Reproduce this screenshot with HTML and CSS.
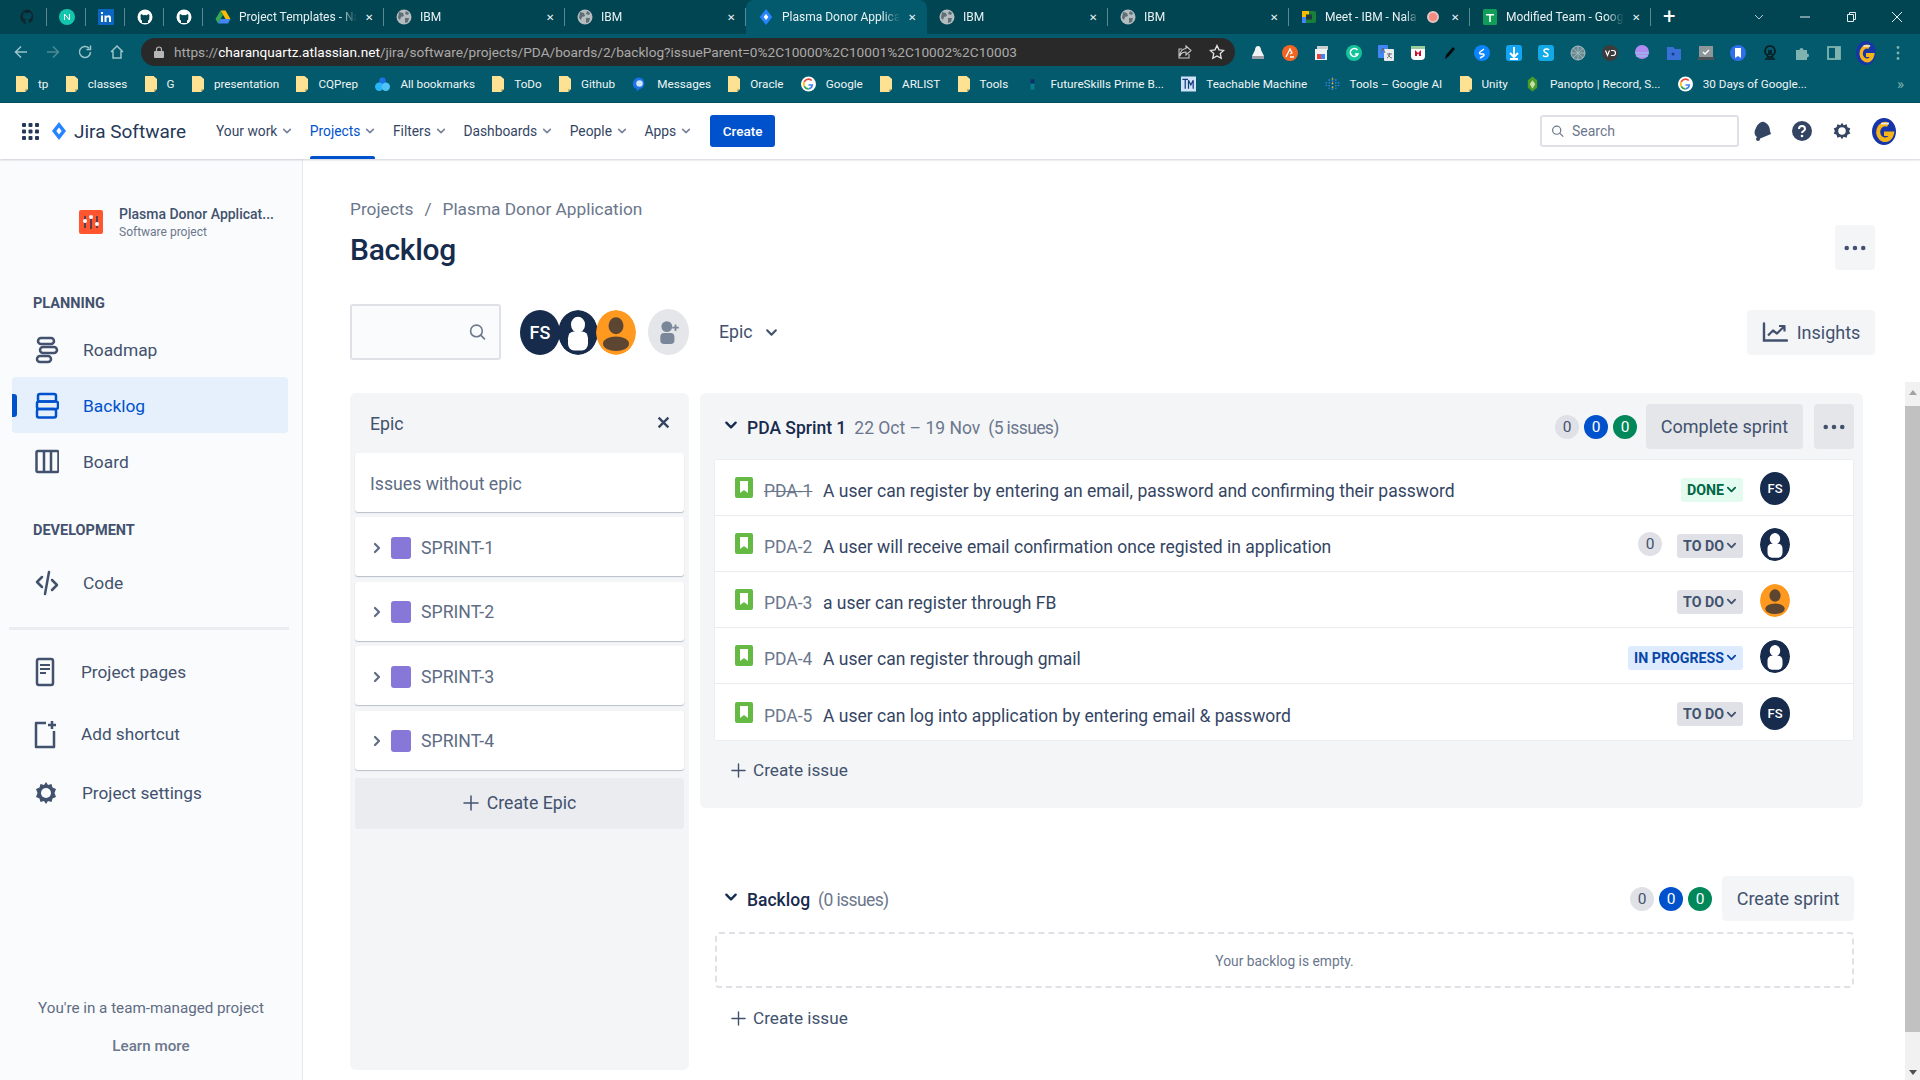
FILE: index.html
```html
<!DOCTYPE html>
<html lang="en">
<head>
    <meta charset="UTF-8">
    <title>Backlog - Jira</title>
    <link rel="stylesheet" href="styles.css">
</head>
<body>

<svg class="sprite" xmlns="http://www.w3.org/2000/svg">
    <symbol id="globe" viewBox="0 0 16 16"><circle cx="8" cy="8" r="7.5" fill="#b4bcc0"/><path d="M3 3l4 1 1 3-3 1-1 3-2-2zM10 2l3 2-1 2-3-1zM9 9l4 0-1 4-3 1z" fill="#5f6f76"/></symbol>
    <symbol id="github-white" viewBox="0 0 16 16"><circle cx="8" cy="8" r="7.5" fill="#fff"/><path d="M5 14v-2.500C3.500 11 3.500 9.800 3.800 8.500 3.300 7 3.600 5.800 4 5.200c1 0 1.800.6 2.200 1a6 6 0 0 1 3.600 0c.4-.4 1.200-1 2.200-1 .4.6.7 1.800.2 3.300.3 1.300.3 2.500-1.200 3V14z" fill="#024552"/></symbol>
    <symbol id="github-dark" viewBox="0 0 16 16"><path d="M8 .5a7.500 7.500 0 0 0-2.400 14.600v-2.600C3.500 13 3 11.500 3 11.500c-.4-.9-1-1.200-1-1.200.7 0 1.300.7 1.300.7.700 1.200 1.800.8 2.300.6 0-.5.300-.8.500-1C4.300 10.300 2.600 9.600 2.600 7c0-.8.300-1.400.7-1.900 0-.2-.3-1 .1-1.900 0 0 .6-.2 2 .7a6.500 6.500 0 0 1 3.600 0c1.400-.9 2-.7 2-.7.400.9.100 1.700.1 1.900.4.500.7 1.100.7 1.900 0 2.600-1.700 3.300-3.400 3.500.3.200.5.600.5 1.200v2.600A7.500 7.500 0 0 0 8 .5z" fill="#10222a"/></symbol>
    <symbol id="folder" viewBox="0 0 12 16"><path d="M0 0h8.500L12 3v10l-3 3H0z" fill="#fde293"/><path d="M12 13l-3 3v-3z" fill="#c9b26b"/></symbol>
    <symbol id="google" viewBox="0 0 16 16"><circle cx="8" cy="8" r="8" fill="#fff"/><path d="M13 8.200H8v1.700h3a3.200 3.200 0 0 1-3 2.300V14a5.800 5.800 0 0 0 5-5.800z" fill="#4285f4"/><path d="M8 14v-1.800a4.200 4.200 0 0 1-3.800-2.400l-1.500 1.100A6 6 0 0 0 8 14z" fill="#34a853"/><path d="M4.200 9.800a4.200 4.200 0 0 1 0-3.600L2.700 5.100a6 6 0 0 0 0 5.800z" fill="#fbbc05"/><path d="M8 3.800a4 4 0 0 1 2.800 1.100l1.300-1.300A6 6 0 0 0 2.700 5.100l1.500 1.100A4.200 4.200 0 0 1 8 3.800z" fill="#ea4335"/></symbol>
    <symbol id="jira-mark" viewBox="0 0 16 18"><path d="M8 0l7 9-7 9-7-9z" fill="#2684ff"/><path d="M8 5.500L10.700 9 8 12.500 5.300 9z" fill="#fff"/></symbol>
    <symbol id="chevron-down" viewBox="0 0 12 12"><path d="M2 4l4 4 4-4" fill="none" stroke="currentColor" stroke-width="2" stroke-linecap="round" stroke-linejoin="round"/></symbol>
    <symbol id="chevron-right" viewBox="0 0 12 12"><path d="M4 2l4 4-4 4" fill="none" stroke="currentColor" stroke-width="2.200" stroke-linecap="round" stroke-linejoin="round"/></symbol>
    <symbol id="plus" viewBox="0 0 16 16"><path d="M8 1v14M1 8h14" fill="none" stroke="currentColor" stroke-width="1.500" stroke-linecap="round"/></symbol>
    <symbol id="dots" viewBox="0 0 24 6"><circle cx="3" cy="3" r="2.500" fill="currentColor"/><circle cx="12" cy="3" r="2.500" fill="currentColor"/><circle cx="21" cy="3" r="2.500" fill="currentColor"/></symbol>
    <symbol id="story" viewBox="0 0 18 21"><rect width="18" height="21" rx="2" fill="#65ba43"/><path d="M5 4h8v12l-4-3-4 3z" fill="#fff"/></symbol>
    <symbol id="avatar-user" viewBox="0 0 40 40" preserveAspectRatio="none"><circle cx="20" cy="20" r="20" fill="#172b4d"/><circle cx="20" cy="13" r="7" fill="#fff"/><rect x="10" y="19" width="20" height="17" rx="6" fill="#fff"/></symbol>
    <symbol id="avatar-orange" viewBox="0 0 40 40" preserveAspectRatio="none"><circle cx="20" cy="20" r="20" fill="#ff991f"/><circle cx="20" cy="14" r="7.500" fill="#5c4632"/><ellipse cx="20" cy="30" rx="13" ry="6.500" fill="#5c4632"/></symbol>
</svg>

<div class="tabbar">
    <div class="pinned"><svg class="favicon"><use href="#github-dark"/></svg></div>
    <div class="pinned"><svg class="favicon" viewBox="0 0 16 16"><circle cx="8" cy="8" r="8" fill="#13c7ae"/><path d="M5.500 11V5l5 6V5" fill="none" stroke="#fff" stroke-width="1"/></svg></div>
    <div class="pinned"><svg class="favicon" viewBox="0 0 16 16"><rect width="16" height="16" rx="1" fill="#0a66c2"/><path d="M3 6.500h2V13H3zM3 3h2v2H3zM6.500 6.500h2v1c.5-.8 1.200-1.200 2.200-1.200 1.700 0 2.300 1.100 2.300 3V13h-2V9.800c0-1-.3-1.600-1.100-1.600-.9 0-1.400.6-1.400 1.700V13h-2z" fill="#fff"/></svg></div>
    <div class="pinned"><svg class="favicon"><use href="#github-white"/></svg></div>
    <div class="pinned"><svg class="favicon"><use href="#github-white"/></svg></div>
    <div class="tab">
        <svg class="favicon" viewBox="0 0 16 16"><path d="M5.500 1.500h5L15.500 10H10.500z" fill="#fbbc04"/><path d="M5.500 1.500L.5 10l2.500 4.500L8 6z" fill="#34a853"/><path d="M3 14.500h10l2.500-4.500h-10z" fill="#4285f4"/></svg>
        <span class="tab-title">Project Templates - Na</span><span class="tab-close">✕</span>
    </div>
    <div class="tab"><svg class="favicon"><use href="#globe"/></svg><span class="tab-title">IBM</span><span class="tab-close">✕</span></div>
    <div class="tab"><svg class="favicon"><use href="#globe"/></svg><span class="tab-title">IBM</span><span class="tab-close">✕</span></div>
    <div class="tab tab-active"><svg class="favicon"><use href="#jira-mark"/></svg><span class="tab-title">Plasma Donor Applica</span><span class="tab-close">✕</span></div>
    <div class="tab"><svg class="favicon"><use href="#globe"/></svg><span class="tab-title">IBM</span><span class="tab-close">✕</span></div>
    <div class="tab"><svg class="favicon"><use href="#globe"/></svg><span class="tab-title">IBM</span><span class="tab-close">✕</span></div>
    <div class="tab">
        <svg class="favicon" viewBox="0 0 16 16"><rect x="1" y="2" width="14" height="12" rx="2" fill="#188038"/><rect x="1" y="2" width="7" height="6" fill="#fbbc04"/><rect x="1" y="8" width="4" height="6" fill="#4285f4"/><rect x="5" y="5.500" width="6" height="5" fill="#1d3a40"/></svg>
        <span class="tab-title">Meet - IBM - Nala</span><span class="rec-dot"></span><span class="tab-close">✕</span>
    </div>
    <div class="tab">
        <svg class="favicon" viewBox="0 0 16 16"><rect x="1" width="14" height="16" rx="1.500" fill="#0f9d58"/><path d="M4 5h8v1.500H8.800V13H7.200V6.500H4z" fill="#fff"/></svg>
        <span class="tab-title">Modified Team - Goog</span><span class="tab-close">✕</span>
    </div>
    <span class="new-tab">+</span>
    <div class="window-controls">
        <svg viewBox="0 0 12 12"><path d="M2 4l4 4 4-4" fill="none" stroke="#b9cdd2" stroke-width="1"/></svg>
        <svg viewBox="0 0 12 12"><path d="M1 6h10" stroke="#e6eef0" stroke-width="1"/></svg>
        <svg viewBox="0 0 12 12"><path d="M2.500 3.500h6v7h-6zM4.500 3.500v-2h6v7h-2" fill="none" stroke="#e6eef0" stroke-width="1"/></svg>
        <svg viewBox="0 0 12 12"><path d="M1 1l10 10M11 1L1 11" stroke="#e6eef0" stroke-width="1"/></svg>
    </div>
</div>

<div class="toolbar">
    <div class="browser-nav">
        <svg viewBox="0 0 16 16"><path d="M14 8H2.500M8 2.500L2.500 8 8 13.500" fill="none" stroke="#9cc4c9" stroke-width="1.500"/></svg>
        <svg viewBox="0 0 16 16"><path d="M2 8h11.500M8 2.500L13.500 8 8 13.500" fill="none" stroke="#4d8b96" stroke-width="1.500"/></svg>
        <svg viewBox="0 0 16 16"><path d="M13.500 8a5.500 5.500 0 1 1-1.600-3.900M13.500 1.500v4h-4" fill="none" stroke="#9cc4c9" stroke-width="1.500"/></svg>
        <svg viewBox="0 0 16 16"><path d="M2 8l6-6 6 6M4 7v7h8V7" fill="none" stroke="#9cc4c9" stroke-width="1.500"/></svg>
    </div>
    <div class="addressbar">
        <svg class="lock" viewBox="0 0 10 12"><rect y="5" width="10" height="7" rx="1" fill="#b7b7b7"/><path d="M2.500 5V3.500a2.500 2.500 0 0 1 5 0V5" fill="none" stroke="#b7b7b7" stroke-width="1.200"/></svg>
        <span class="url">https://<b>charanquartz.atlassian.net</b>/jira/software/projects/PDA/boards/2/backlog?issueParent=0%2C10000%2C10001%2C10002%2C10003</span>
        <svg class="addr-icon" viewBox="0 0 16 16"><path d="M9 2l5 4.500L9 11V8C6 8 4 9 3 12c0-4 2-7 6-7.500zM12 10v4H2V5h3" fill="none" stroke="#c7c7c7" stroke-width="1.100"/></svg>
        <svg class="addr-icon" viewBox="0 0 16 16"><path d="M8 1.500l2 4.300 4.700.6-3.400 3.200.9 4.700L8 12l-4.200 2.300.9-4.700L1.300 6.400 6 5.800z" fill="none" stroke="#e5e5e5" stroke-width="1.300"/></svg>
    </div>
    <div class="extensions">
        <svg viewBox="0 0 16 16"><path d="M8 1c2 0 3 2 3 4l3 6v3H2v-3l3-6c0-2 1-4 3-4z" fill="#f1f3f4"/><rect x="2" y="11" width="12" height="3" fill="#9aa0a6"/></svg>
        <svg viewBox="0 0 16 16"><circle cx="8" cy="8" r="8" fill="#f26522"/><path d="M4 12l4-8 2 4-2 1M8 12h4" fill="none" stroke="#fff" stroke-width="1.300"/></svg>
        <svg viewBox="0 0 16 16"><rect x="3" y="1" width="11" height="4" fill="#c9ced1"/><rect x="1" y="4" width="12" height="11" fill="#f1f3f4"/><rect x="3" y="9" width="4" height="5" fill="#ea4335"/><rect x="7" y="9" width="4" height="5" fill="#4285f4"/></svg>
        <svg viewBox="0 0 16 16"><circle cx="8" cy="8" r="8" fill="#15c39a"/><path d="M11.500 5a4 4 0 1 0 .5 4H9" fill="none" stroke="#fff" stroke-width="1.500"/></svg>
        <svg viewBox="0 0 16 16"><rect x="0" y="0" width="10" height="13" rx="1" fill="#4285f4"/><rect x="6" y="4" width="10" height="12" rx="1" fill="#e8eaed"/><path d="M3 8l2-5 2 5M9 9h5M11.500 8c0 3-1 4-2.500 5M10.500 10c.5 1.500 2 3 3.500 3" fill="none" stroke="#5f6368" stroke-width=".9"/></svg>
        <svg viewBox="0 0 16 16"><path d="M1 1h14v10a4 4 0 0 1-4 4H5a4 4 0 0 1-4-4z" fill="#fff"/><path d="M1 1h14v3H1z" fill="#9ccc9c"/><path d="M5 5l3 3 3-3v6H9V8.500L8 9.500 7 8.500V11H5z" fill="#c8102e"/></svg>
        <svg viewBox="0 0 16 16"><path d="M3 14l1-4 7-8 2 2-7 8z" fill="#0a0a0a"/></svg>
        <svg viewBox="0 0 16 16"><circle cx="8" cy="8" r="8" fill="#0a84ff"/><path d="M10 4L6 7c-1 1-.5 2 1 2l2 0c1 0 1.500 1 .5 2L6 13" fill="none" stroke="#fff" stroke-width="1.500"/></svg>
        <svg viewBox="0 0 16 16"><rect width="16" height="16" rx="3" fill="#12a5f4"/><path d="M8 2v9M4 8l4 4 4-4M4 14h8" fill="none" stroke="#fff" stroke-width="2"/></svg>
        <svg viewBox="0 0 16 16"><rect width="16" height="16" rx="3" fill="#11a9e8"/><path d="M11 5c-1-1.500-5-1.500-5 .8C6 8 10 7.500 10 10c0 2-3.500 2-5 .5" fill="none" stroke="#fff" stroke-width="1.500"/></svg>
        <svg viewBox="0 0 16 16"><circle cx="8" cy="8" r="7" fill="#6a8a91" stroke="#a9bcc0"/><path d="M8 1v14M1 8h14M3 3l10 10M13 3L3 13" stroke="#a9bcc0" stroke-width=".8"/></svg>
        <svg viewBox="0 0 16 16"><circle cx="8" cy="8" r="8" fill="#3c3c3c"/><path d="M3.500 5.500l2 5 2-5M9 5.500h2a2.500 2.500 0 0 1 0 5H9" fill="none" stroke="#fff" stroke-width="1.200"/></svg>
        <svg viewBox="0 0 16 16"><circle cx="8" cy="7" r="7" fill="#b18bf0"/><path d="M1 8h14M2 11h12" stroke="#8fd0e8" stroke-width="1.200"/></svg>
        <svg viewBox="0 0 16 16"><path d="M1 2h6l2 2h6v11H1z" fill="#3a6fd8"/><circle cx="7" cy="9" r="1.500" fill="#0f3d8c"/></svg>
        <svg viewBox="0 0 16 16"><rect x="1" y="1" width="14" height="11" fill="#8d9699"/><rect y="12" width="16" height="3" fill="#4b5356"/><path d="M5 7l2 2 4-4" fill="none" stroke="#fff" stroke-width="1.300"/></svg>
        <svg viewBox="0 0 16 16"><circle cx="8" cy="8" r="8" fill="#2f6fed"/><path d="M5 3h6v10L8 11l-3 2z" fill="#fff"/></svg>
        <svg viewBox="0 0 16 16"><path d="M8 1a5 5 0 0 0-2.500 9.300V12h5v-1.700A5 5 0 0 0 8 1zM7 5v5M9 5v5M3 14h10" fill="none" stroke="#0b1a1e" stroke-width="1.600"/></svg>
        <svg viewBox="0 0 16 16"><path d="M2 5h3.500a2 2 0 1 1 4 0H13v3.500a2 2 0 1 1 0 4V15H2z" fill="#7fb3b0"/></svg>
        <svg viewBox="0 0 16 16"><rect x="2" y="2" width="12" height="12" fill="none" stroke="#7fb3b0" stroke-width="1.800"/><rect x="9" y="2" width="5" height="12" fill="#7fb3b0"/></svg>
        <svg class="ext-avatar" viewBox="0 0 24 24" preserveAspectRatio="none"><circle cx="12" cy="12" r="12" fill="#1535a8"/><path d="M16 6a7 7 0 1 0 4 8h-8" fill="none" stroke="#f5b518" stroke-width="4"/><path d="M9 5h8" stroke="#e8e8f8" stroke-width="1.500"/></svg>
        <svg class="ext-menu" viewBox="0 0 4 16"><circle cx="2" cy="2.500" r="1.400" fill="#7fb3b0"/><circle cx="2" cy="8" r="1.400" fill="#7fb3b0"/><circle cx="2" cy="13.500" r="1.400" fill="#7fb3b0"/></svg>
    </div>
</div>

<div class="bookmarks">
    <span class="bm"><svg class="bm-folder"><use href="#folder"/></svg>tp</span>
    <span class="bm"><svg class="bm-folder"><use href="#folder"/></svg>classes</span>
    <span class="bm"><svg class="bm-folder"><use href="#folder"/></svg>G</span>
    <span class="bm"><svg class="bm-folder"><use href="#folder"/></svg>presentation</span>
    <span class="bm"><svg class="bm-folder"><use href="#folder"/></svg>CQPrep</span>
    <span class="bm"><svg class="bm-icon" viewBox="0 0 16 16"><circle cx="8" cy="4.500" r="3.500" fill="#1a73e8"/><circle cx="4.500" cy="11" r="4.500" fill="#29b6f6"/><circle cx="11.500" cy="11" r="4.500" fill="#4fc3f7"/></svg>All bookmarks</span>
    <span class="bm"><svg class="bm-folder"><use href="#folder"/></svg>ToDo</span>
    <span class="bm"><svg class="bm-folder"><use href="#folder"/></svg>Github</span>
    <span class="bm"><svg class="bm-icon" viewBox="0 0 16 16"><path d="M8 1a7 6.500 0 0 0-3 12.400V16l3-2.500A7 6.500 0 0 0 8 1z" fill="#1a73e8"/><circle cx="8" cy="7.500" r="3.500" fill="#d2e3fc"/></svg>Messages</span>
    <span class="bm"><svg class="bm-folder"><use href="#folder"/></svg>Oracle</span>
    <span class="bm"><svg class="bm-icon"><use href="#google"/></svg>Google</span>
    <span class="bm"><svg class="bm-folder"><use href="#folder"/></svg>ARLIST</span>
    <span class="bm"><svg class="bm-folder"><use href="#folder"/></svg>Tools</span>
    <span class="bm"><svg class="bm-icon" viewBox="0 0 16 16"><rect x="6" y="3" width="4" height="4" fill="#0f2d6b"/><rect x="6" y="8" width="4" height="6" fill="#0d7c8c"/></svg>FutureSkills Prime B...</span>
    <span class="bm"><svg class="bm-icon" viewBox="0 0 16 16"><rect width="16" height="16" fill="#cfe2f7"/><path d="M1.500 3h6M4.500 3v10M8 13V4l2.500 5L13 4v9" fill="none" stroke="#123b7a" stroke-width="1.300"/></svg>Teachable Machine</span>
    <span class="bm"><svg class="bm-icon" viewBox="0 0 16 16"><path d="M8 1v14M4.500 3v10M11.500 3v10M1.500 6v4M14.500 6v4" fill="none" stroke="#4285f4" stroke-width="1.600" stroke-dasharray="1.500 1.500"/><path d="M8 2v12" stroke="#fbbc04" stroke-width="1.600" stroke-dasharray="1.500 3"/></svg>Tools – Google AI</span>
    <span class="bm"><svg class="bm-folder"><use href="#folder"/></svg>Unity</span>
    <span class="bm"><svg class="bm-icon" viewBox="0 0 16 16"><path d="M8 0l5 4v8l-5 4-5-4V4z" fill="#4c9a2a"/><path d="M8 4l3 4-3 5-3-5z" fill="#c5e1a5"/></svg>Panopto | Record, S...</span>
    <span class="bm"><svg class="bm-icon"><use href="#google"/></svg>30 Days of Google...</span>
    <span class="bm-more">»</span>
</div>

<header class="topnav">
    <svg class="apps-grid" viewBox="0 0 17 17"><g fill="#253858"><rect width="4" height="4" rx="1"/><rect x="6.500" width="4" height="4" rx="1"/><rect x="13" width="4" height="4" rx="1"/><rect y="6.500" width="4" height="4" rx="1"/><rect x="6.500" y="6.500" width="4" height="4" rx="1"/><rect x="13" y="6.500" width="4" height="4" rx="1"/><rect y="13" width="4" height="4" rx="1"/><rect x="6.500" y="13" width="4" height="4" rx="1"/><rect x="13" y="13" width="4" height="4" rx="1"/></g></svg>
    <div class="logo"><svg class="logo-mark"><use href="#jira-mark"/></svg><span>Jira Software</span></div>
    <nav class="topnav-menu">
        <a class="menu-item">Your work<svg><use href="#chevron-down"/></svg></a>
        <a class="menu-item menu-active">Projects<svg><use href="#chevron-down"/></svg></a>
        <a class="menu-item">Filters<svg><use href="#chevron-down"/></svg></a>
        <a class="menu-item">Dashboards<svg><use href="#chevron-down"/></svg></a>
        <a class="menu-item">People<svg><use href="#chevron-down"/></svg></a>
        <a class="menu-item">Apps<svg><use href="#chevron-down"/></svg></a>
    </nav>
    <button class="create-btn">Create</button>
    <div class="topnav-right">
        <div class="nav-search">
            <svg viewBox="0 0 16 16"><circle cx="7" cy="7" r="5" fill="none" stroke="#6b778c" stroke-width="1.500"/><path d="M11 11l4 4" stroke="#6b778c" stroke-width="1.500"/></svg>
            <span>Search</span>
        </div>
        <svg class="nav-icon" viewBox="0 0 20 20"><path d="M12 1c3 1 6 4 6 9l1 3-12 5-2-2c-3-2-3-6-1-9 1-3 5-7 8-6z" fill="#344563"/><circle cx="6" cy="18" r="2" fill="#344563"/></svg>
        <svg class="nav-icon" viewBox="0 0 20 20"><circle cx="10" cy="10" r="10" fill="#344563"/><path d="M7 8c0-4 6-4 6 0 0 2-3 2-3 4" fill="none" stroke="#fff" stroke-width="2"/><circle cx="10" cy="15" r="1.300" fill="#fff"/></svg>
        <svg class="nav-icon nav-gear" viewBox="0 0 24 24"><path d="M12 2l2 3 3.500-1 1 3.500L22 9l-1.500 3 1.500 3-3.500 1.500-1 3.500-3.500-1-2 3-2-3-3.500 1-1-3.500L2 15l1.500-3L2 9l3.500-1.500 1-3.500L10 5z" fill="#344563"/><circle cx="12" cy="12" r="4.500" fill="#fff"/></svg>
        <svg class="nav-avatar" viewBox="0 0 24 24" preserveAspectRatio="none"><circle cx="12" cy="12" r="12" fill="#1535a8"/><path d="M16 6a7 7 0 1 0 4 8h-8" fill="none" stroke="#f5b518" stroke-width="4"/><path d="M9 5h8" stroke="#e8e8f8" stroke-width="1.500"/></svg>
    </div>
</header>

<div class="workspace">
    <aside class="sidebar">
        <div class="project-head">
            <svg class="project-icon" viewBox="0 0 24 24"><rect width="24" height="24" rx="2" fill="#ff5630"/><path d="M6 6v12M12 5v14M18 6v12" stroke="#253858" stroke-width="1.500"/><circle cx="6" cy="11" r="2" fill="#fff"/><circle cx="12" cy="7" r="2" fill="#fff"/><circle cx="18" cy="14" r="2" fill="#fff"/></svg>
            <div>
                <div class="project-name">Plasma Donor Applicat...</div>
                <div class="project-type">Software project</div>
            </div>
        </div>

        <h4 class="side-title">PLANNING</h4>
        <a class="side-item">
            <svg viewBox="0 0 24 28"><g fill="none" stroke="#42526e" stroke-width="2.500"><rect x="3" y="2" width="16" height="6" rx="3"/><rect x="5" y="11" width="17" height="6" rx="3"/><rect x="2" y="20" width="14" height="6" rx="3"/></g></svg>
            Roadmap
        </a>
        <a class="side-item side-active">
            <svg viewBox="0 0 24 28"><g fill="none" stroke="#0052cc" stroke-width="2.500"><rect x="3" y="2" width="18" height="7.500" rx="2"/><rect x="2" y="9.500" width="21" height="7.500" rx="2"/><rect x="2" y="17" width="19" height="8.500" rx="2"/></g></svg>
            Backlog
        </a>
        <a class="side-item">
            <svg viewBox="0 0 24 28"><g fill="none" stroke="#42526e" stroke-width="2.500"><rect x="1.500" y="3" width="22" height="21" rx="1.500"/><path d="M9 3v21M16 3v21"/></g></svg>
            Board
        </a>

        <h4 class="side-title side-title-dev">DEVELOPMENT</h4>
        <a class="side-item">
            <svg viewBox="0 0 24 28"><path d="M7 8l-5 5 5 5M17 11l5 5-5 5M14 3l-4 22" fill="none" stroke="#42526e" stroke-width="2.500" stroke-linecap="round" stroke-linejoin="round"/></svg>
            Code
        </a>

        <div class="side-divider"></div>

        <a class="side-link">
            <svg viewBox="0 0 24 30"><g fill="none" stroke="#42526e" stroke-width="2.500"><rect x="4" y="2" width="16" height="26" rx="2"/></g><path d="M7 7h10v2H7zM7 11h10v2H7zM7 15h6v2H7z" fill="#42526e"/></svg>
            Project pages
        </a>
        <a class="side-link side-link-short">
            <svg viewBox="0 0 24 30"><path d="M13 4H3v24h18V12" fill="none" stroke="#42526e" stroke-width="2.500" stroke-linejoin="round"/><path d="M19 2v8M15 6h8" stroke="#42526e" stroke-width="2.500"/></svg>
            Add shortcut
        </a>
        <a class="side-link side-link-settings">
            <svg viewBox="0 0 24 24"><path d="M12 1l2 3 3.500-1 1 3.500L22 8l-1.500 4 1.500 4-3.500 1.500-1 3.500-3.500-1-2 3-2-3-3.500 1-1-3.500L2 16l1.500-4L2 8l3.500-1.500 1-3.500L10 4z" fill="#42526e"/><circle cx="12" cy="12" r="5" fill="#fafbfc"/></svg>
            Project settings
        </a>

        <div class="side-foot">
            <p>You're in a team-managed project</p>
            <p class="learn-more">Learn more</p>
        </div>
    </aside>

    <main class="main">
        <div class="page-head">
            <div>
                <div class="crumbs"><span>Projects</span><span class="crumb-sep">/</span><span>Plasma Donor Application</span></div>
                <h1>Backlog</h1>
            </div>
            <button class="grey-btn more-btn"><svg class="dots"><use href="#dots"/></svg></button>
        </div>

        <div class="filters">
            <div class="filter-search">
                <svg viewBox="0 0 16 16"><circle cx="7" cy="7" r="5.500" fill="none" stroke="#6b778c" stroke-width="1.500"/><path d="M11 11l4 4" stroke="#6b778c" stroke-width="1.500"/></svg>
            </div>
            <div class="avatars">
                <span class="av-big av-fs">FS</span>
                <svg class="av-big"><use href="#avatar-user"/></svg>
                <svg class="av-big"><use href="#avatar-orange"/></svg>
            </div>
            <span class="av-add">
                <svg viewBox="0 0 24 24"><circle cx="10" cy="7" r="5" fill="#7a869a"/><rect x="4" y="13" width="13" height="10" rx="3.500" fill="#7a869a"/><path d="M18 5v6M15 8h6" stroke="#7a869a" stroke-width="1.600"/></svg>
            </span>
            <span class="epic-filter">Epic<svg><use href="#chevron-down"/></svg></span>
            <button class="grey-btn insights-btn">
                <svg viewBox="0 0 26 20"><path d="M2 1v17h23" fill="none" stroke="#42526e" stroke-width="2.400" stroke-linecap="round"/><path d="M6 13l5-5 4 3 7-7M17 3.500h5.500V9" fill="none" stroke="#42526e" stroke-width="2.200" stroke-linejoin="round"/></svg>
                Insights
            </button>
        </div>

        <div class="board">
            <section class="epic-panel">
                <div class="epic-head">
                    <span>Epic</span>
                    <svg viewBox="0 0 12 12"><path d="M1.500 1.500l9 9M10.500 1.500l-9 9" stroke="#344563" stroke-width="2.200"/></svg>
                </div>
                <div class="epic-card">Issues without epic</div>
                <div class="epic-card epic-sprint"><svg class="epic-arrow"><use href="#chevron-right"/></svg><span class="epic-color"></span>SPRINT-1</div>
                <div class="epic-card epic-sprint"><svg class="epic-arrow"><use href="#chevron-right"/></svg><span class="epic-color"></span>SPRINT-2</div>
                <div class="epic-card epic-sprint"><svg class="epic-arrow"><use href="#chevron-right"/></svg><span class="epic-color"></span>SPRINT-3</div>
                <div class="epic-card epic-sprint"><svg class="epic-arrow"><use href="#chevron-right"/></svg><span class="epic-color"></span>SPRINT-4</div>
                <button class="create-epic"><svg><use href="#plus"/></svg>Create Epic</button>
            </section>

            <div class="sprints">
                <section class="sprint-panel">
                    <div class="sprint-head">
                        <svg class="sprint-chevron"><use href="#chevron-down"/></svg>
                        <strong>PDA Sprint 1</strong>
                        <span class="sprint-meta">22 Oct – 19 Nov</span>
                        <span class="sprint-meta sprint-issues">(5 issues)</span>
                        <div class="counters">
                            <span class="count">0</span>
                            <span class="count count-blue">0</span>
                            <span class="count count-green">0</span>
                        </div>
                        <button class="grey-btn dark-btn complete-btn">Complete sprint</button>
                        <button class="grey-btn dark-btn sprint-more"><svg class="dots"><use href="#dots"/></svg></button>
                    </div>
                    <div class="issues">
                        <div class="issue">
                            <svg class="story"><use href="#story"/></svg>
                            <span class="issue-key issue-done">PDA-1</span>
                            <span class="issue-title">A user can register by entering an email, password and confirming their password</span>
                            <span class="status status-done">DONE<svg><use href="#chevron-down"/></svg></span>
                            <span class="av-small av-fs">FS</span>
                        </div>
                        <div class="issue">
                            <svg class="story"><use href="#story"/></svg>
                            <span class="issue-key">PDA-2</span>
                            <span class="issue-title">A user will receive email confirmation once registed in application</span>
                            <span class="count issue-count">0</span>
                            <span class="status">TO DO<svg><use href="#chevron-down"/></svg></span>
                            <svg class="av-small"><use href="#avatar-user"/></svg>
                        </div>
                        <div class="issue">
                            <svg class="story"><use href="#story"/></svg>
                            <span class="issue-key">PDA-3</span>
                            <span class="issue-title">a user can register through FB</span>
                            <span class="status">TO DO<svg><use href="#chevron-down"/></svg></span>
                            <svg class="av-small"><use href="#avatar-orange"/></svg>
                        </div>
                        <div class="issue">
                            <svg class="story"><use href="#story"/></svg>
                            <span class="issue-key">PDA-4</span>
                            <span class="issue-title">A user can register through gmail</span>
                            <span class="status status-progress">IN PROGRESS<svg><use href="#chevron-down"/></svg></span>
                            <svg class="av-small"><use href="#avatar-user"/></svg>
                        </div>
                        <div class="issue">
                            <svg class="story"><use href="#story"/></svg>
                            <span class="issue-key">PDA-5</span>
                            <span class="issue-title">A user can log into application by entering email &amp; password</span>
                            <span class="status">TO DO<svg><use href="#chevron-down"/></svg></span>
                            <span class="av-small av-fs">FS</span>
                        </div>
                    </div>
                    <div class="create-issue"><svg><use href="#plus"/></svg>Create issue</div>
                </section>

                <section class="backlog">
                    <div class="backlog-head">
                        <svg class="sprint-chevron"><use href="#chevron-down"/></svg>
                        <strong>Backlog</strong>
                        <span class="sprint-meta sprint-issues">(0 issues)</span>
                        <div class="counters">
                            <span class="count">0</span>
                            <span class="count count-blue">0</span>
                            <span class="count count-green">0</span>
                        </div>
                        <button class="grey-btn create-sprint">Create sprint</button>
                    </div>
                    <div class="backlog-empty">Your backlog is empty.</div>
                    <div class="create-issue create-issue-low"><svg><use href="#plus"/></svg>Create issue</div>
                </section>
            </div>
        </div>
    </main>

    <div class="scrollbar">
        <span class="scroll-up"></span>
        <div class="scroll-thumb"></div>
        <span class="scroll-down"></span>
    </div>
</div>

</body>
</html>
```

FILE: styles.css
```css
* {
    margin: 0;
    padding: 0;
    box-sizing: border-box;
}

body {
    width: 1920px;
    height: 1080px;
    overflow: hidden;
    background: white;
    font-family: Roboto, "Liberation Sans", sans-serif;
    color: #42526e;
}

button {
    font-family: inherit;
    border: none;
    cursor: pointer;
}

.sprite {
    display: none;
}

/* browser chrome */

.tabbar {
    display: flex;
    align-items: stretch;
    height: 34px;
    padding-left: 8px;
    background: #024552;
    color: #e9f1f3;
    font-size: 12px;
}

.pinned {
    width: 39px;
    display: flex;
    align-items: center;
    justify-content: center;
    position: relative;
}

.pinned::after,
.tab::after {
    content: "";
    position: absolute;
    right: 0;
    top: 8px;
    bottom: 8px;
    width: 1px;
    background: #5d8791;
}

.favicon {
    width: 16px;
    height: 16px;
    flex: none;
}

.tab {
    width: 181px;
    display: flex;
    align-items: center;
    gap: 8px;
    padding: 0 11px 0 12px;
    position: relative;
}

.tab-active {
    background: #035a6c;
    border-radius: 8px 8px 0 0;
}

.tab-active::after {
    display: none;
}

.tab-title {
    flex: 1;
    min-width: 0;
    white-space: nowrap;
    -webkit-mask-image: linear-gradient(to right, black 85%, transparent);
    mask-image: linear-gradient(to right, black 85%, transparent);
}

.tab-close {
    font-size: 10px;
    color: #eef4f5;
}

.rec-dot {
    width: 12px;
    height: 12px;
    margin-right: 4px;
    border-radius: 50%;
    background: #f28b82;
    border: 2px solid #e8c4c0;
    flex: none;
}

.new-tab {
    margin-left: 12px;
    font-size: 22px;
    line-height: 34px;
    color: white;
}

.window-controls {
    margin-left: auto;
    display: flex;
    align-items: center;
    gap: 34px;
    padding-right: 17px;
}

.window-controls svg {
    width: 12px;
    height: 12px;
}

.toolbar {
    display: flex;
    align-items: center;
    height: 35px;
    background: #035a6c;
}

.browser-nav {
    display: flex;
    gap: 16px;
    width: 141px;
    padding-left: 13px;
}

.browser-nav svg {
    width: 16px;
    height: 16px;
}

.addressbar {
    width: 1094px;
    height: 28px;
    margin-top: 1px;
    border-radius: 14px;
    background: #292929;
    display: flex;
    align-items: center;
    padding: 0 10px 0 13px;
    color: #a9a9a9;
    font-size: 13.65px;
}

.lock {
    width: 10px;
    height: 12px;
    margin-right: 10px;
}

.url {
    flex: 1;
    white-space: nowrap;
}

.url b {
    font-weight: 400;
    color: white;
}

.addr-icon {
    width: 16px;
    height: 16px;
    margin-left: 16px;
}

.extensions {
    display: flex;
    align-items: center;
    gap: 16px;
    padding-left: 15px;
    margin-top: 2px;
}

.extensions svg {
    width: 16px;
    height: 16px;
}

.extensions .ext-avatar {
    width: 20px;
    height: 24px;
    margin: 0 -2px;
}

.extensions .ext-menu {
    width: 4px;
    margin: 0 6px;
}

.bookmarks {
    display: flex;
    align-items: center;
    gap: 17.3px;
    height: 34px;
    padding: 0 0 3px 16px;
    background: #035a6c;
    border-bottom: 1px solid #02505f;
    color: #f0f5f6;
    font-size: 11.7px;
    white-space: nowrap;
}

.bm {
    display: flex;
    align-items: center;
    gap: 10px;
}

.bm-folder {
    width: 12px;
    height: 16px;
}

.bm-icon {
    width: 15px;
    height: 16px;
}

.bm-more {
    margin-left: auto;
    margin-right: 16px;
    color: #7fb3b0;
    font-size: 15px;
}

/* jira top nav */

.topnav {
    display: flex;
    align-items: center;
    height: 56px;
    padding-left: 22px;
    background: white;
    box-shadow: 0 1px 2px rgba(9, 30, 66, 0.2);
    position: relative;
    z-index: 2;
}

.apps-grid {
    width: 17px;
    height: 17px;
}

.logo {
    display: flex;
    align-items: center;
    gap: 7px;
    margin-left: 12px;
    width: 165px;
    color: #253858;
    font-size: 19px;
}

.logo-mark {
    width: 16px;
    height: 18px;
}

.topnav-menu {
    display: flex;
    align-self: stretch;
    gap: 17.5px;
}

.menu-item {
    display: flex;
    align-items: center;
    gap: 5px;
    font-size: 13.8px;
    color: #344563;
    position: relative;
}

.menu-item svg {
    width: 10px;
    height: 10px;
    color: #7a869a;
}

.menu-active {
    color: #0052cc;
}

.menu-active::after {
    content: "";
    position: absolute;
    left: 0;
    right: 0;
    bottom: 0;
    height: 3px;
    border-radius: 2px 2px 0 0;
    background: #0052cc;
}

.create-btn {
    width: 65px;
    height: 32px;
    margin-left: 19px;
    background: #0052cc;
    color: white;
    border-radius: 3px;
    font-size: 13.5px;
    font-weight: 500;
}

.topnav-right {
    margin-left: auto;
    display: flex;
    align-items: center;
    padding-right: 24px;
}

.nav-search {
    display: flex;
    align-items: center;
    gap: 8px;
    width: 199px;
    height: 32px;
    padding-left: 9px;
    border: 2px solid #dfe1e6;
    border-radius: 3px;
    color: #6b778c;
    font-size: 14px;
    margin-right: 13px;
}

.nav-search svg {
    width: 13px;
    height: 14px;
}

.nav-icon {
    width: 20px;
    height: 22px;
    margin-right: 20px;
}

.nav-gear {
    margin-right: 22px;
}

.nav-avatar {
    width: 24px;
    height: 27px;
    margin-left: -2px;
}

/* sidebar */

.workspace {
    display: flex;
    height: 921px;
}

.sidebar {
    width: 303px;
    flex: none;
    display: flex;
    flex-direction: column;
    padding-top: 41px;
    background: #fafbfc;
    border-right: 1px solid #e6e8ec;
}

.project-head {
    display: flex;
    align-items: center;
    gap: 16px;
    padding-left: 79px;
    height: 44px;
}

.project-icon {
    width: 24px;
    height: 24px;
}

.project-name {
    font-size: 14px;
    font-weight: 500;
    color: #42526e;
}

.project-type {
    margin-top: 3px;
    font-size: 12px;
    color: #6b778c;
}

.side-title {
    margin: 50px 0 0 33px;
    height: 20px;
    line-height: 20px;
    font-size: 14.5px;
    font-weight: 700;
    color: #42526e;
}

.side-title-dev {
    margin-top: 32px;
}

.side-item {
    display: flex;
    align-items: center;
    gap: 24px;
    width: 276px;
    height: 56px;
    margin-left: 12px;
    padding: 2px 0 0 23px;
    border-radius: 4px;
    font-size: 17.4px;
    color: #42526e;
    position: relative;
}

.side-item svg {
    width: 24px;
    height: 28px;
    flex: none;
}

.side-title + .side-item {
    margin-top: 7px;
}

.side-title-dev + .side-item {
    margin-top: 13px;
}

.side-active {
    background: #e6effc;
    color: #0052cc;
}

.side-active::before {
    content: "";
    position: absolute;
    left: 0;
    top: 17px;
    width: 5px;
    height: 23px;
    border-radius: 0 3px 3px 0;
    background: #0052cc;
}

.side-divider {
    height: 3px;
    margin: 17px 13px 0 9px;
    background: #ebecf0;
}

.side-link {
    display: flex;
    align-items: center;
    gap: 24px;
    height: 30px;
    margin: 27px 0 0 33px;
    font-size: 17.2px;
    color: #42526e;
}

.side-link svg {
    width: 24px;
    height: 30px;
    flex: none;
}

.side-link-short {
    margin-top: 32px;
}

.side-link-settings {
    margin-top: 29px;
    margin-left: 34px;
}

.side-foot {
    margin-top: auto;
    padding-bottom: 25px;
    text-align: center;
    font-size: 15.2px;
    color: #5e6c84;
}

.learn-more {
    margin-top: 20px;
    font-weight: 500;
    color: #6b778c;
}

/* main */

.main {
    flex: 1;
    min-width: 0;
    padding: 38px 0 0 47px;
}

.page-head {
    display: flex;
    justify-content: space-between;
    padding-right: 30px;
}

.crumbs {
    display: flex;
    gap: 11px;
    height: 24px;
    line-height: 24px;
    font-size: 17.3px;
    color: #6b778c;
}

h1 {
    margin-top: 9px;
    height: 40px;
    line-height: 40px;
    font-size: 30px;
    font-weight: 500;
    letter-spacing: -0.3px;
    color: #172b4d;
}

.grey-btn {
    background: #f4f5f7;
    color: #42526e;
    border-radius: 4px;
    font-size: 18px;
}

.dark-btn {
    background: #e4e6ea;
}

.more-btn {
    width: 40px;
    height: 45px;
    margin-top: 28px;
}

.dots {
    display: block;
    width: 22px;
    height: 6px;
    margin: 0 auto;
    color: #42526e;
}

.filters {
    display: flex;
    align-items: center;
    height: 56px;
    margin-top: 34px;
    padding-right: 30px;
}

.filter-search {
    display: flex;
    align-items: center;
    justify-content: flex-end;
    width: 151px;
    height: 56px;
    padding-right: 13px;
    background: #fafbfc;
    border: 2px solid #dfe1e6;
    border-radius: 3px;
}

.filter-search svg {
    width: 17px;
    height: 18px;
}

.avatars {
    display: flex;
    margin-left: 19px;
}

.av-big {
    width: 40px;
    height: 45px;
    border-radius: 50%;
    display: flex;
    align-items: center;
    justify-content: center;
}

.avatars .av-big + .av-big {
    margin-left: -2px;
}

.av-fs {
    background: #172b4d;
    color: white;
    font-weight: 500;
    font-size: 18px;
    flex: none;
}

.av-add {
    width: 41px;
    height: 46px;
    margin-left: 12px;
    border-radius: 50%;
    background: #e4e6ea;
    display: flex;
    align-items: center;
    justify-content: center;
}

.av-add svg {
    width: 26px;
    height: 30px;
}

.epic-filter {
    display: flex;
    align-items: center;
    gap: 12px;
    margin-left: 30px;
    font-size: 17.7px;
    color: #42526e;
}

.epic-filter svg {
    width: 13px;
    height: 13px;
}

.insights-btn {
    display: flex;
    align-items: center;
    justify-content: center;
    gap: 9px;
    width: 128px;
    height: 45px;
    margin-left: auto;
}

.insights-btn svg {
    width: 26px;
    height: 21px;
}

.board {
    display: flex;
    gap: 11px;
    margin-top: 33px;
}

.epic-panel {
    width: 339px;
    height: 677px;
    flex: none;
    padding: 0 5px;
    background: #f4f5f7;
    border-radius: 6px;
}

.epic-head {
    display: flex;
    align-items: center;
    justify-content: space-between;
    height: 60px;
    padding: 2px 14px 0 15px;
    font-size: 17.7px;
    color: #42526e;
}

.epic-head svg {
    width: 13px;
    height: 13px;
    margin-bottom: 4px;
}

.epic-card {
    display: flex;
    align-items: center;
    height: 59px;
    margin-bottom: 5.4px;
    padding: 2px 0 0 15px;
    background: white;
    border-radius: 3px;
    box-shadow: 0 1px 1px rgba(9, 30, 66, 0.25);
    font-size: 17.7px;
    color: #5e6c84;
}

.epic-sprint {
    padding-left: 16px;
}

.epic-arrow {
    width: 12px;
    height: 12px;
    margin-right: 8px;
    color: #5e6c84;
}

.epic-color {
    width: 20px;
    height: 22px;
    margin-right: 10px;
    background: #8777d9;
    border-radius: 3px;
}

.create-epic {
    display: flex;
    align-items: center;
    justify-content: center;
    gap: 8px;
    width: 100%;
    height: 51px;
    margin-top: 8px;
    background: #ebecf0;
    border-radius: 3px;
    font-size: 17.7px;
    color: #42526e;
}

.create-epic svg {
    width: 16px;
    height: 16px;
}

.sprints {
    width: 1163px;
    flex: none;
}

.sprint-panel {
    height: 415px;
    padding: 0 10px 0 15px;
    background: #f4f5f7;
    border-radius: 6px;
}

.sprint-head,
.backlog-head {
    display: flex;
    align-items: center;
    height: 67px;
    padding-left: 9px;
    font-size: 17.5px;
}

.sprint-head {
    margin-right: -1px;
}

.backlog-head {
    height: 45px;
}

.sprint-head strong,
.backlog-head strong {
    padding-top: 2px;
    font-weight: 500;
    color: #172b4d;
    margin-left: 9px;
}

.sprint-chevron {
    width: 14px;
    height: 14px;
    margin-bottom: 4px;
    color: #172b4d;
}

.sprint-meta {
    padding-top: 2px;
    margin-left: 8px;
    color: #6b778c;
}

.sprint-issues {
    letter-spacing: -0.6px;
}

.counters {
    display: flex;
    gap: 5px;
    margin-left: auto;
}

.count {
    width: 24px;
    height: 24px;
    border-radius: 50%;
    background: #dfe1e6;
    color: #42526e;
    font-size: 15.5px;
    text-align: center;
    line-height: 24px;
}

.count-blue {
    background: #0052cc;
    color: white;
}

.count-green {
    background: #00875a;
    color: white;
}

.complete-btn {
    width: 157px;
    height: 45px;
    margin-left: 9px;
}

.sprint-more {
    width: 40px;
    height: 45px;
    margin-left: 11px;
}

.issues {
    background: white;
    box-shadow: 0 0 1px rgba(9, 30, 66, 0.2);
}

.issue {
    display: flex;
    align-items: center;
    height: 56px;
    padding: 0 63px 0 20px;
    border-bottom: 1px solid #ebecf0;
    font-size: 17.5px;
}

.issue:last-child {
    border-bottom: none;
}

.story {
    width: 18px;
    height: 21px;
    flex: none;
}

.issue-key {
    width: 50px;
    margin-left: 11px;
    color: #6b778c;
    flex: none;
    padding-top: 7px;
}

.issue-done {
    text-decoration: line-through;
}

.issue-title {
    flex: 1;
    margin-left: 9px;
    padding-top: 7px;
    color: #344563;
    white-space: nowrap;
}

.issue-count {
    margin-right: 15px;
}

.status {
    display: flex;
    align-items: center;
    gap: 2px;
    height: 24px;
    margin-top: 4px;
    padding: 0 6px;
    border-radius: 3px;
    background: #dfe1e6;
    color: #42526e;
    font-size: 14.2px;
    font-weight: 700;
}

.status svg {
    width: 11px;
    height: 11px;
}

.status-done {
    background: #e3fcef;
    color: #006644;
}

.status-progress {
    background: #deebff;
    color: #0747a6;
}

.av-small {
    width: 30px;
    height: 33px;
    margin: 2px 0 0 17px;
    border-radius: 50%;
    flex: none;
    display: flex;
    align-items: center;
    justify-content: center;
    font-size: 13px;
}

.create-issue {
    display: flex;
    align-items: center;
    gap: 7px;
    height: 58px;
    padding: 2px 0 0 16px;
    font-size: 17.2px;
    color: #42526e;
}

.create-issue svg {
    width: 15px;
    height: 15px;
}

.backlog {
    margin: 68px 9px 0 15px;
}

.backlog-empty {
    height: 56px;
    margin-top: 11px;
    border: 2px dashed #dfe1e6;
    border-radius: 4px;
    text-align: center;
    line-height: 54px;
    font-size: 13.8px;
    color: #6b778c;
}

.create-sprint {
    width: 132px;
    height: 45px;
    margin-left: 10px;
}

/* page scrollbar */

.scrollbar {
    width: 15px;
    margin-top: 223px;
    background: #f1f1f1;
    display: flex;
    flex-direction: column;
    align-items: center;
}

.scroll-up {
    margin-top: 8px;
    border: 4px solid transparent;
    border-top: none;
    border-bottom: 5px solid #a3a3a3;
}

.scroll-thumb {
    width: 15px;
    height: 626px;
    margin-top: 11px;
    background: #c1c1c1;
}

.scroll-down {
    margin-top: 38px;
    border: 4px solid transparent;
    border-bottom: none;
    border-top: 5px solid #505050;
}
```
